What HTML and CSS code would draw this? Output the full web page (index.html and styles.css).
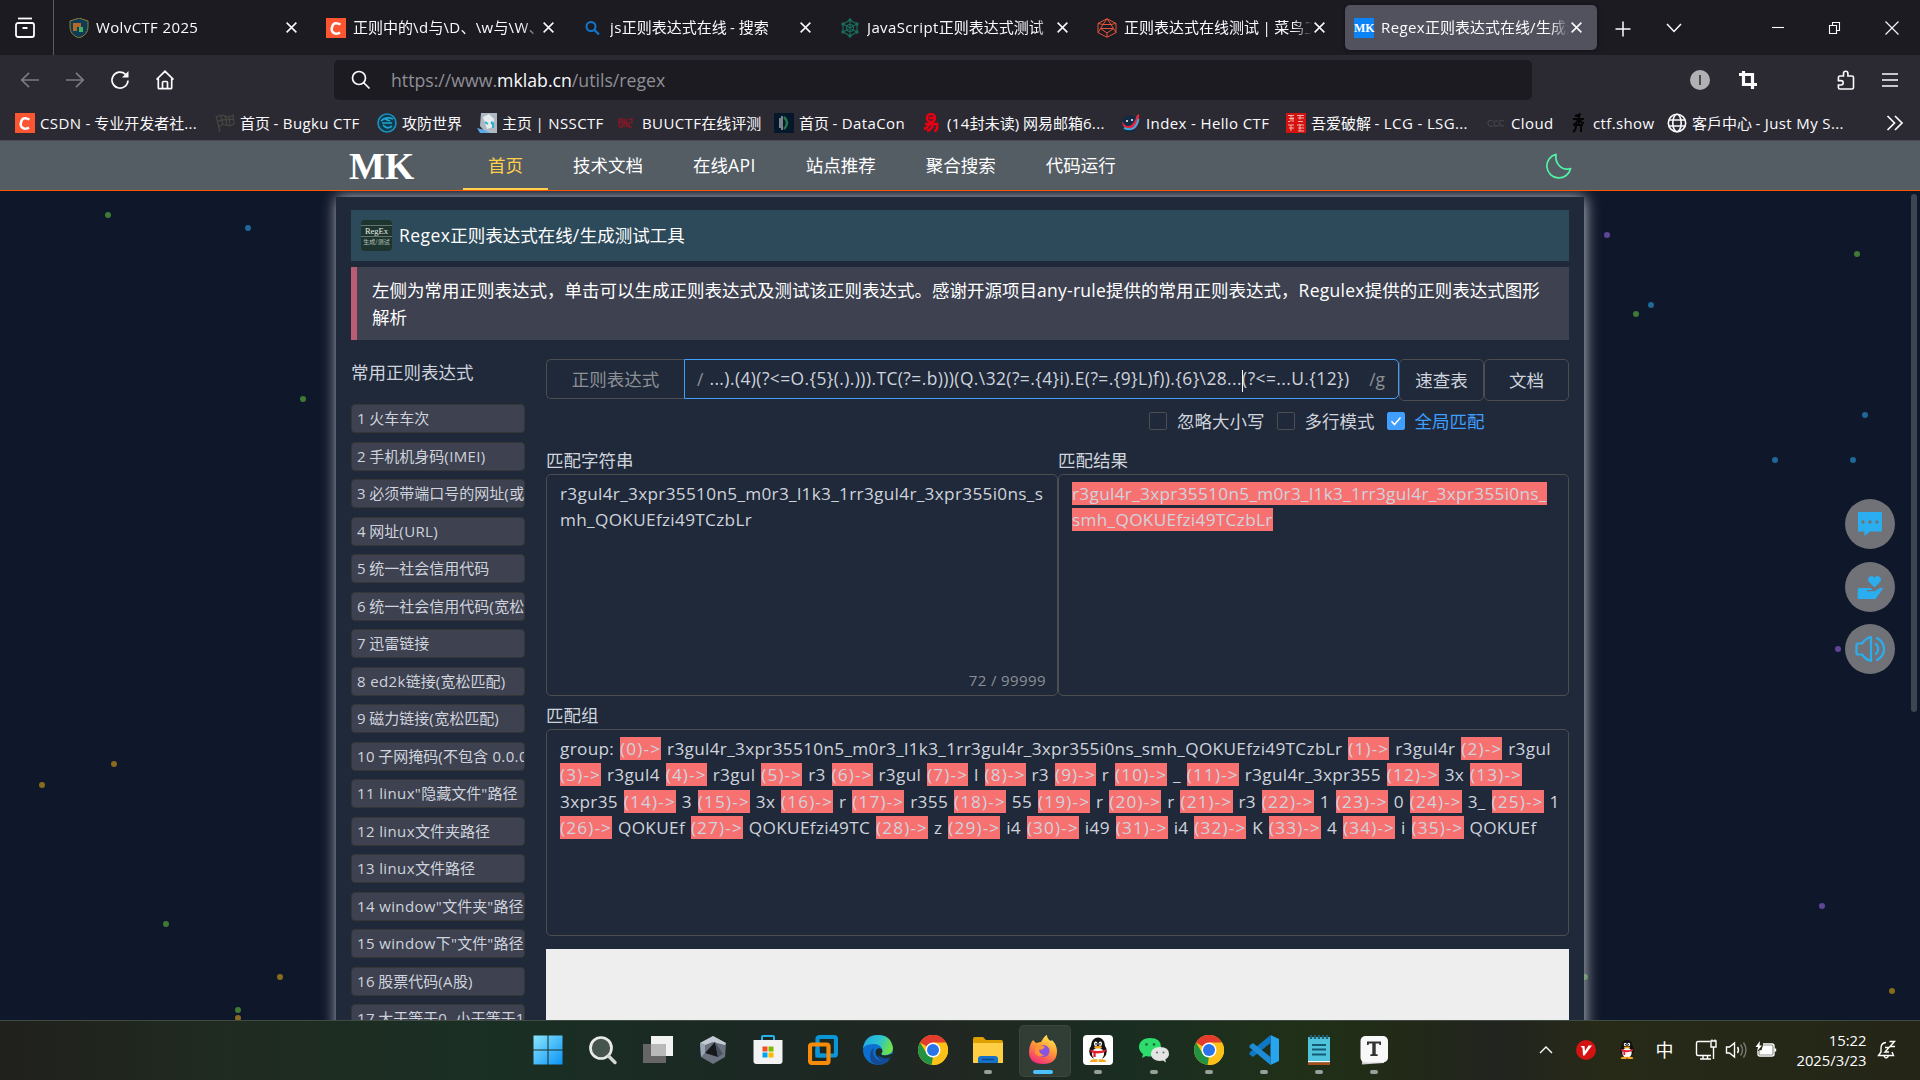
FILE: index.html
```html
<!DOCTYPE html>
<html lang="zh-CN">
<head>
<meta charset="utf-8">
<title>Regex正则表达式在线/生成测试工具</title>
<link rel="stylesheet" href="styles.css">
</head>
<body>
<svg class="defs" aria-hidden="true">
  <symbol id="x" viewBox="0 0 12 12"><path d="M1.5 1.5l9 9M10.5 1.5l-9 9" stroke="currentColor" stroke-width="1.4" fill="none"/></symbol>
  <symbol id="chrome" viewBox="0 0 30 30"><circle cx="15" cy="15" r="15" fill="#fbc116"/><path d="M15 15L2 7.5A15 15 0 0 1 28 7.5Z" fill="#e33b2e"/><path d="M2 7.5L9 19 15 22 13.500 29.900A15 15 0 0 1 2 7.500Z" fill="#229342"/><path d="M15 7.500H28A15 15 0 0 1 14 30L21 18Z" fill="#fbc116"/><circle cx="15" cy="15" r="7.500" fill="#fff"/><circle cx="15" cy="15" r="6" fill="#2a74ea"/></symbol>
  <symbol id="penguin" viewBox="0 0 20 22"><ellipse cx="10" cy="12" rx="7.600" ry="7.500" fill="#111"/><ellipse cx="10" cy="7" rx="6" ry="6.800" fill="#111"/><ellipse cx="10" cy="14.500" rx="5.200" ry="5.500" fill="#fff"/><ellipse cx="8" cy="5.500" rx="1.500" ry="2" fill="#fff"/><ellipse cx="12" cy="5.500" rx="1.500" ry="2" fill="#fff"/><circle cx="8.300" cy="5.700" r=".7"/><circle cx="11.700" cy="5.700" r=".7"/><ellipse cx="10" cy="8.700" rx="3.400" ry="1.100" fill="#f8a71a"/><path d="M3.500 10.500q6.500 2.800 13 0v2.300q-4 1.400-8.500 1.100V17H6v-3.500l-2.500-.8z" fill="#e41f2c"/><path d="M3 21q0-2 4-2h2.500v2.500H4zM17 21q0-2-4-2h-2.500v2.500H16z" fill="#f8a71a"/></symbol>
</svg>

<header class="tabstrip">
  <div class="history"><svg width="22" height="22" viewBox="0 0 22 22" fill="none" stroke="#fbfbfe" stroke-width="1.8"><path d="M4 1.500h14"/><rect x="2" y="6" width="18" height="14" rx="2"/><path d="M8.500 11h5" stroke-width="2"/></svg></div>
  <div class="tabs">
    <div class="tab"><svg class="fav" viewBox="0 0 20 20"><path d="M10 0l9 3v6q0 8-9 11Q1 17 1 9V3z" fill="#0e3c57" stroke="#8a8130"/><path d="M4 5h8v4H8v4H4z" fill="#b5682a"/><path d="M10 9h4v5h-4z" fill="#42b35c"/></svg><span class="ttl"><i>WolvCTF 2025</i></span><svg class="cls"><use href="#x"/></svg></div>
    <div class="tab"><svg class="fav" viewBox="0 0 20 20"><path fill="#fc5531" d="M0 0h20v20H0z"/><path d="M14.500 6.500Q8 3 6.200 8.500T9 15.500q3 .6 5-1" fill="none" stroke="#fff" stroke-width="2.500"/></svg><span class="ttl">正则中的<i>\d</i>与<i>\D</i>、<i>\w</i>与<i>\W</i>、</span><svg class="cls"><use href="#x"/></svg></div>
    <div class="tab"><svg class="fav" viewBox="0 0 20 20"><circle cx="8" cy="8.500" r="4.500" fill="none" stroke="#0f77d0" stroke-width="2"/><path d="M11 11.500l5 5" stroke="#0f77d0" stroke-width="2.200"/></svg><span class="ttl"><i>js</i>正则表达式在线 <i>-</i> 搜索</span><svg class="cls"><use href="#x"/></svg></div>
    <div class="tab"><svg class="fav" viewBox="0 0 20 20" fill="none" stroke="#1a6d5d" stroke-width="1.100"><path d="M10 2l7 4v8l-7 4-7-4V6zM10 2v16M3 6l14 8M17 6L3 14"/><circle cx="10" cy="10" r="3.500"/><g fill="#1a6d5d" stroke="none"><circle cx="10" cy="2" r="1.700"/><circle cx="17" cy="6" r="1.700"/><circle cx="17" cy="14" r="1.700"/><circle cx="10" cy="18" r="1.700"/><circle cx="3" cy="14" r="1.700"/><circle cx="3" cy="6" r="1.700"/></g></svg><span class="ttl"><i>JavaScript</i>正则表达式测试</span><svg class="cls"><use href="#x"/></svg></div>
    <div class="tab"><svg class="fav" viewBox="0 0 20 20" fill="none" stroke="#e2563a" stroke-width="1"><path d="M10 .8l9 4.600v9.200l-9 4.600-9-4.600V5.400zM6 6.500h8l2.500 4L10 15l-6.500-4.500zM10 .8L6 6.500M10 .8l4 5.700M1 14.600l2.500-4.100M19 14.600l-2.500-4.100M1 5.400l5 1.100M19 5.400l-5 1.100M10 15v4.200M3.500 10.500h13"/></svg><span class="ttl">正则表达式在线测试 <i>|</i> 菜鸟工</span><svg class="cls"><use href="#x"/></svg></div>
    <div class="tab on"><span class="fav mkfav">MK</span><span class="ttl"><i>Regex</i>正则表达式在线<i>/</i>生成测</span><svg class="cls"><use href="#x"/></svg></div>
  </div>
  <svg class="strip-ic plus" width="16" height="16" viewBox="0 0 16 16"><path d="M8 .5v15M.5 8h15"/></svg>
  <svg class="strip-ic down" width="16" height="10" viewBox="0 0 16 10"><path d="M1 1l7 7.500L15 1"/></svg>
  <div class="winctl">
    <svg width="14" height="14" viewBox="0 0 14 14"><path d="M1 6.500h12"/></svg>
    <svg width="14" height="14" viewBox="0 0 14 14"><path d="M1.500 4.500h7v8h-7zM4.500 4.500V1.500h7v8h-3"/></svg>
    <svg width="14" height="14" viewBox="0 0 14 14"><path d="M.5 .5l13 13M13.500 .5l-13 13"/></svg>
  </div>
</header>

<nav class="toolbar">
  <div class="nav-ic">
    <svg class="dim" width="20" height="20" viewBox="0 0 20 20"><path d="M19 10H2M9 2.800L1.800 10 9 17.200"/></svg>
    <svg class="dim" width="20" height="20" viewBox="0 0 20 20"><path d="M1 10h17M11 2.800L18.200 10 11 17.200"/></svg>
    <svg width="20" height="20" viewBox="0 0 20 20"><path d="M18 10.500a8 8 0 1 1-2.500-6.200L17 6"/><path d="M18.500 1v6.500H12z" fill="#fbfbfe" stroke="none"/></svg>
    <svg width="20" height="20" viewBox="0 0 20 20"><path d="M1.500 9.500L10 1.300l8.500 8.200M3.300 8.500v9.200q0 1 1 1h11.400q1 0 1-1V8.500M7.500 18.500v-6q0-1 1-1h3q1 0 1 1v6"/></svg>
  </div>
  <div class="urlbar">
    <svg width="20" height="20" viewBox="0 0 20 20" fill="none" stroke="#fbfbfe" stroke-width="1.700"><circle cx="8" cy="8" r="6.500"/><path d="M12.500 12.500l6 6"/></svg>
    <span>https://www.<b>mklab.cn</b>/utils/regex</span>
  </div>
  <div class="ext">
    <svg width="20" height="20" viewBox="0 0 20 20"><circle cx="10" cy="10" r="10" fill="#b1b1b3"/><path d="M10 5v10" stroke="#2b2a33" stroke-width="1.500"/></svg>
    <svg width="20" height="20" viewBox="0 0 20 20" fill="none" stroke="#fbfbfe" stroke-width="3.200"><path d="M5.500 1v13.500H19M1 4.500h13.500V19"/></svg>
    <svg width="20" height="20" viewBox="0 0 20 20" fill="none" stroke="#fbfbfe" stroke-width="1.600"><path d="M7.500 6V3.500a2.200 2.200 0 0 1 4.400 0V6h4q1.600 0 1.600 1.600v9.800q0 1.600-1.600 1.600H4q-1.600 0-1.600-1.600V15H5a2.200 2.200 0 0 0 0-4.400H2.400V7.600Q2.400 6 4 6z"/></svg>
    <svg width="16" height="16" viewBox="0 0 16 16" stroke="#fbfbfe" stroke-width="1.500"><path d="M0 2h16M0 8h16M0 14h16"/></svg>
  </div>
</nav>

<div class="bookmarks">
  <div><svg viewBox="0 0 20 20"><path fill="#fc5531" d="M0 0h20v20H0z"/><path d="M14.500 6.500Q8 3 6.200 8.500T9 15.500q3 .6 5-1" fill="none" stroke="#fff" stroke-width="2.500"/></svg><span><i>CSDN -</i> 专业开发者社<i>...</i></span></div>
  <div><svg viewBox="0 0 20 20" fill="none" stroke="#45443f" stroke-width="1.300"><path d="M1 3l4 16M2 4q4-3 8-1t8-1l1 9q-4 3-8 1t-7 2M6 3l2 9M10 3l2 9M14 3l1 10M3 8q8-2 15-2"/></svg><span>首页 <i>- Bugku CTF</i></span></div>
  <div><svg viewBox="0 0 20 20"><circle cx="10" cy="10" r="9" fill="#103a4d" stroke="#1a91bd" stroke-width="1.600"/><path d="M4 8q5-5 12-2M5 10h10M6 12q4 5 9 1M8 6l5 2" stroke="#1fa5cf" stroke-width="1.700" fill="none"/></svg><span>攻防世界</span></div>
  <div><svg viewBox="0 0 20 20"><path d="M4 0h16v20H9L3 13z" fill="#aeb9c4"/><path d="M6 4l6-3 5 5-1 8-6 2z" fill="#e5ebef"/><path d="M8 9l3 2M14 9l2 1v5" stroke="#2ab4cc" stroke-width="2"/><path d="M0 15q7 1 13 5H3z" fill="#5da8e8"/></svg><span>主页 <i>| NSSCTF</i></span></div>
  <div><svg viewBox="0 0 20 20" fill="none" stroke="#8c1626" stroke-width="1.300"><path d="M2 6v8M2 6h3v3H2M2 14h3v-4M7 14V6l3 8V6M12 6h3v3l-3 1v4h3"/></svg><span><i>BUUCTF</i>在线评测</span></div>
  <div><svg viewBox="0 0 20 20"><path fill="#05172a" d="M0 0h20v20H0z"/><path d="M6 5v10M8 3v14" stroke="#9b9fa3" stroke-width="1.600"/><path d="M10 4q6 6 0 12" stroke="#23754c" stroke-width="2.500" fill="none"/></svg><span>首页 <i>- DataCon</i></span></div>
  <div><svg viewBox="0 0 20 20" fill="none" stroke="#e60012" stroke-width="2.600"><circle cx="9" cy="5" r="4"/><path d="M7 5h5M3 11h12q1 7-3 7M7 11q-1 4-5 5M11 12q-2 5-6 6"/></svg><span><i>(14</i>封未读<i>)</i> 网易邮箱<i>6...</i></span></div>
  <div><svg viewBox="0 0 20 20"><circle cx="9" cy="11" r="8.500" fill="#122b45"/><path d="M1 8q3 6 7 5t7-8q0-3 3-4 1 16-9 16Q1 16 1 8" fill="#df2941"/><path d="M3 15q11 5 14.500-9" stroke="#3ea9df" stroke-width="2" fill="none"/><circle cx="6" cy="8" r="1" fill="#fff"/><circle cx="11" cy="7" r="1" fill="#fff"/></svg><span><i>Index - Hello CTF</i></span></div>
  <div><svg viewBox="0 0 20 20"><path fill="#d41212" d="M0 0h20v20H0z"/><path d="M2 2.500h6M5 2.500v6M3 5.500h5M2 8.500h2M7 4v5M11 2.500h7M12 5h6M14 2.500v4M12 8.500h5M2 12h6M5 12v6M3 15h5M11 12h7M12 15h6M12 18h6M14 11v7" stroke="#f5c5b5" stroke-width=".9"/></svg><span>吾爱破解 <i>- LCG - LSG...</i></span></div>
  <div><svg viewBox="0 0 20 20" fill="none" stroke="#43424b" stroke-width="1.300"><path d="M7 8q-5-2-5 2t5 3M12 8q-5-1-4 3t5 1M18 8q-5-2-4.500 2t4.500 2.500"/></svg><span><i>Cloud</i></span></div>
  <div><svg viewBox="0 0 20 20" fill="none" stroke="#050505" stroke-width="2"><path d="M7 3l6-2M5 6h11M11 1v10M10 6q-1 5-5 6M12 7q1 3 4 3M7 12h8M8 12q0 5-3 7M13 12v7"/></svg><span><i>ctf.show</i></span></div>
  <div><svg viewBox="0 0 20 20" fill="none" stroke="#fbfbfe" stroke-width="1.600"><circle cx="10" cy="10" r="8.700"/><ellipse cx="10" cy="10" rx="4.200" ry="8.700"/><path d="M2 7h16M2 13h16"/></svg><span>客戶中心 <i>- Just My S...</i></span></div>
  <svg class="more" width="18" height="16" viewBox="0 0 18 16"><path d="M1.500 1l7 7-7 7M9 1l7 7-7 7" fill="none" stroke="#fbfbfe" stroke-width="1.700"/></svg>
</div>

<div class="sitebar">
  <div class="inner">
    <span class="logo">MK</span>
    <a class="on">首页</a><a>技术文档</a><a>在线<i>API</i></a><a>站点推荐</a><a>聚合搜索</a><a>代码运行</a>
    <svg class="moon" width="26" height="26" viewBox="0 0 26 26"><path d="M10 1.300A12 12 0 1 0 24.600 15.500Q18 17.500 13.500 13T10 1.300Z" fill="none" stroke="#4ff5a5" stroke-width="1.700" stroke-linejoin="round"/></svg>
  </div>
</div>

<main class="page">
  <svg class="stars" viewBox="0 191 1920 829">
    <g fill="#3f7a35"><circle cx="108" cy="215" r="3"/><circle cx="303" cy="399" r="3"/><circle cx="166" cy="924" r="3"/><circle cx="238" cy="1010" r="3"/><circle cx="1857" cy="254" r="3"/><circle cx="1636" cy="314" r="3"/><circle cx="1585" cy="977" r="3"/></g>
    <g fill="#1f6796"><circle cx="248" cy="228" r="3"/><circle cx="1651" cy="305" r="3"/><circle cx="1865" cy="415" r="3"/><circle cx="1853" cy="460" r="3"/><circle cx="1775" cy="460" r="3"/></g>
    <g fill="#8a6a1c"><circle cx="114" cy="764" r="3"/><circle cx="42" cy="785" r="3"/><circle cx="280" cy="977" r="3"/><circle cx="238" cy="1018" r="3"/><circle cx="1892" cy="991" r="3"/></g>
    <g fill="#5e4596"><circle cx="1607" cy="235" r="3"/><circle cx="1838" cy="649" r="3"/><circle cx="1822" cy="906" r="3"/></g>
  </svg>

  <div class="card">
    <h1><span class="badge"><em>RegEx</em><em>生成/测试</em></span><span><i>Regex</i>正则表达式在线<i>/</i>生成测试工具</span></h1>
    <p class="note">左侧为常用正则表达式，单击可以生成正则表达式及测试该正则表达式。感谢开源项目<i>any-rule</i>提供的常用正则表达式，<i>Regulex</i>提供的正则表达式图形解析</p>
    <div class="cols">
      <aside>
        <h2>常用正则表达式</h2>
        <ul>
          <li><i>1</i> 火车车次</li>
          <li><i>2</i> 手机机身码<i>(IMEI)</i></li>
          <li><i>3</i> 必须带端口号的网址<i>(</i>或</li>
          <li><i>4</i> 网址<i>(URL)</i></li>
          <li><i>5</i> 统一社会信用代码</li>
          <li><i>6</i> 统一社会信用代码<i>(</i>宽松</li>
          <li><i>7</i> 迅雷链接</li>
          <li><i>8 ed2k</i>链接<i>(</i>宽松匹配<i>)</i></li>
          <li><i>9</i> 磁力链接<i>(</i>宽松匹配<i>)</i></li>
          <li><i>10</i> 子网掩码<i>(</i>不包含<i> 0.0.0</i></li>
          <li><i>11 linux"</i>隐藏文件<i>"</i>路径</li>
          <li><i>12 linux</i>文件夹路径</li>
          <li><i>13 linux</i>文件路径</li>
          <li><i>14 window"</i>文件夹<i>"</i>路径</li>
          <li><i>15 window</i>下<i>"</i>文件<i>"</i>路径</li>
          <li><i>16</i> 股票代码<i>(A</i>股<i>)</i></li>
          <li><i>17</i> 大于等于<i>0, </i>小于等于<i>1</i></li>
        </ul>
      </aside>
      <section class="work">
        <div class="inrow">
          <div class="pre">正则表达式</div>
          <div class="inp"><span class="g">/</span><span class="rx">...).(4)(?&lt;=O.{5}(.).))).TC(?=.b)))(Q.\32(?=.{4}i).E(?=.{9}L)f)).{6}\28...<u></u>(?&lt;=...U.{12})</span><span class="g">/g</span></div>
          <button>速查表</button><button>文档</button>
        </div>
        <div class="opts">
          <label><s></s><span>忽略大小写</span></label><label><s></s><span>多行模式</span></label>
          <label class="ck"><s><svg width="12" height="12" viewBox="0 0 12 12"><path d="M1.500 6.200l3 3.300 6-7" fill="none" stroke="#fff" stroke-width="1.500"/></svg></s><span>全局匹配</span></label>
        </div>
        <div class="pair">
          <div><h3>匹配字符串</h3><div class="box in"><p>r3gul4r_3xpr35510n5_m0r3_l1k3_1rr3gul4r_3xpr355i0ns_s<br>mh_QOKUEfzi49TCzbLr</p><small>72 / 99999</small></div></div>
          <div><h3>匹配结果</h3><div class="box"><p><mark>r3gul4r_3xpr35510n5_m0r3_l1k3_1rr3gul4r_3xpr355i0ns_<br>smh_QOKUEfzi49TCzbLr</mark></p></div></div>
        </div>
        <h3 class="gh">匹配组</h3>
        <div class="box groups"><p>group: <mark>(0)-&gt;</mark> r3gul4r_3xpr35510n5_m0r3_l1k3_1rr3gul4r_3xpr355i0ns_smh_QOKUEfzi49TCzbLr <mark>(1)-&gt;</mark> r3gul4r <mark>(2)-&gt;</mark> r3gul<br>
<mark>(3)-&gt;</mark> r3gul4 <mark>(4)-&gt;</mark> r3gul <mark>(5)-&gt;</mark> r3 <mark>(6)-&gt;</mark> r3gul <mark>(7)-&gt;</mark> l <mark>(8)-&gt;</mark> r3 <mark>(9)-&gt;</mark> r <mark>(10)-&gt;</mark> _ <mark>(11)-&gt;</mark> r3gul4r_3xpr355 <mark>(12)-&gt;</mark> 3x <mark>(13)-&gt;</mark><br>
3xpr35 <mark>(14)-&gt;</mark> 3 <mark>(15)-&gt;</mark> 3x <mark>(16)-&gt;</mark> r <mark>(17)-&gt;</mark> r355 <mark>(18)-&gt;</mark> 55 <mark>(19)-&gt;</mark> r <mark>(20)-&gt;</mark> r <mark>(21)-&gt;</mark> r3 <mark>(22)-&gt;</mark> 1 <mark>(23)-&gt;</mark> 0 <mark>(24)-&gt;</mark> 3_ <mark>(25)-&gt;</mark> 1<br>
<mark>(26)-&gt;</mark> QOKUEf <mark>(27)-&gt;</mark> QOKUEfzi49TC <mark>(28)-&gt;</mark> z <mark>(29)-&gt;</mark> i4 <mark>(30)-&gt;</mark> i49 <mark>(31)-&gt;</mark> i4 <mark>(32)-&gt;</mark> K <mark>(33)-&gt;</mark> 4 <mark>(34)-&gt;</mark> i <mark>(35)-&gt;</mark> QOKUEf</p></div>
        <div class="graph"></div>
      </section>
    </div>
  </div>

  <div class="floaters">
    <div><svg width="26" height="26" viewBox="0 0 26 26"><path d="M1 1h24v19.500H13L7.500 25v-4.500H1z" fill="#2aaef0"/><g fill="#707277"><circle cx="6" cy="11" r="1.700"/><circle cx="13" cy="11" r="1.700"/><circle cx="20" cy="11" r="1.700"/></g></svg></div>
    <div><svg width="26" height="26" viewBox="0 0 26 26" fill="#2aaef0"><path d="M17.500 13.500l-5.700-5.800a3.400 3.400 0 0 1 5.700-4 3.400 3.400 0 0 1 5.700 4z"/><path d="M2 14h11q2.500.3 2.500 2H10v1.300h7.500L23 14q2-.5 3 .6L18.500 25H2q-1.300 0-1.300-1.500V15.500Q.7 14 2 14z"/></svg></div>
    <div><svg width="30" height="28" viewBox="0 0 30 28" fill="none" stroke="#2aaef0" stroke-width="2.200" stroke-linejoin="round" stroke-linecap="round"><path d="M2.500 8.500q-1 0-1 1v9q0 1 1 1H7q4 5.500 9 6.500V2Q11 3 7 8.500z"/><path d="M21 9q4.500 5 0 10M22 3q7 4 7 11t-7 11"/></svg></div>
  </div>
  <div class="scroll"></div>
</main>

<footer class="taskbar">
  <div class="apps">
    <div><svg viewBox="0 0 30 30"><defs><linearGradient id="w" x2="1" y2="1"><stop stop-color="#8be6fd"/><stop offset="1" stop-color="#0a93f5"/></linearGradient></defs><path d="M.5 .5H14.500V14.500H.5zM15.500 .5h14v14h-14zM.5 15.500h14v14H.5zM15.500 15.500h14v14h-14z" fill="url(#w)"/></svg></div>
    <div><svg viewBox="0 0 30 30"><circle cx="13" cy="13" r="10.500" fill="#46564f" stroke="#e9eaea" stroke-width="2.700"/><path d="M20.500 21l6.500 6.500" stroke="#d2d5d6" stroke-width="3.500" stroke-linecap="round"/></svg></div>
    <div><svg viewBox="0 0 30 30"><path d="M0 9h23v19H0z" fill="#666"/><path d="M8 1h22v20H8z" fill="#f2f2f2"/><path d="M8 9h15v12H8z" fill="#b9b9b9"/></svg></div>
    <div><svg viewBox="0 0 30 30"><path d="M15 1l13 7-1 14-12 7L3 22 2 8z" fill="#6b7280"/><path d="M15 1L2 8l5 2 8-3 12 3 1-2z" fill="#c3cad4"/><path d="M2 8l1 14 4-4V10z" fill="#9aa4b2"/><path d="M17 7L7 18l13 4z" fill="#16181c"/><path d="M17 7l3 15 5-3z" fill="#4b5260"/></svg></div>
    <div><svg viewBox="0 0 30 30"><path d="M9 7V2q0-1 1-1h10q1 0 1 1v5" fill="none" stroke="#27b4ea" stroke-width="2"/><path d="M.5 5h29v21q0 3-3 3h-23q-3 0-3-3z" fill="#f3f3f3"/><path d="M9.500 11.500h5v5h-5z" fill="#f25022"/><path d="M15.500 11.500h5v5h-5z" fill="#7fba00"/><path d="M9.500 17.500h5v5h-5z" fill="#00a4ef"/><path d="M15.500 17.500h5v5h-5z" fill="#ffb900"/></svg></div>
    <div><svg viewBox="0 0 30 30" fill="none" stroke-width="4.200"><rect x="9.500" y="2" width="18.500" height="18.500" rx="2" stroke="#0a95d6"/><rect x="2" y="9.500" width="18.500" height="18.500" rx="2" stroke="#f68b0a"/><path d="M9.500 14v6.500H17" stroke="#0a95d6"/></svg></div>
    <div><svg viewBox="0 0 30 30"><defs><linearGradient id="e" x2="1" y2=".3"><stop stop-color="#1fa6e8"/><stop offset=".6" stop-color="#2cc4cf"/><stop offset="1" stop-color="#6ee04c"/></linearGradient></defs><circle cx="15" cy="15" r="15" fill="#0d6fcf"/><path d="M0 13Q2 0 15 0t15 13q0 6-7 7-4 .5-5-1 2-2 1-5-2-5-8-5Q3 9 0 13z" fill="url(#e)"/><path d="M11 13q-3 8 4 12 6 3 12-1-5 6-12 6Q7 29 7 21q0-6 4-8z" fill="#134a93"/><path d="M18 19q2 3 10 0 4-1 1 4-6 4-12 1-6-4-4-9 2-3 6-1 1 3-1 5z" fill="#1c2b24"/><path d="M15 20q5 5 13 2-5 6-12 3z" fill="#134a93"/></svg></div>
    <div><svg><use href="#chrome"/></svg></div>
    <div class="run"><svg viewBox="0 0 30 30"><path d="M0 4q0-2 2-2h8l3 3h15q2 0 2 2v10H0z" fill="#e0a100"/><path d="M0 8h30v20H0z" fill="#ffce45"/><path d="M5 28v-4q0-3 3-3h14q3 0 3 3v4z" fill="#1672c9"/><path d="M9 24.500h12" stroke="#0b4a93" stroke-width="1.500"/></svg></div>
    <div class="run act"><svg viewBox="0 0 30 30"><defs><linearGradient id="f" x1=".8" y1="0" x2=".3" y2="1"><stop stop-color="#fff14a"/><stop offset=".45" stop-color="#ff9420"/><stop offset="1" stop-color="#f3166e"/></linearGradient></defs><path d="M3 8l2-3 3 3 5-1q4-7 6-7 0 4 4 6l1-1q5 5 5 11 0 13-14 13T1 17q0-5 2-9z" fill="url(#f)"/><circle cx="15.500" cy="16" r="6" fill="#7a42e0"/><path d="M7 12q5-4 10 0-2 3-6 3 1 5 6 5-7 3-10-2z" fill="#ff8a1e"/></svg></div>
    <div class="run"><svg viewBox="0 0 30 30"><rect width="30" height="30" rx="4" fill="#fff"/><svg x="3.500" y="2" width="23" height="26"><use href="#penguin"/></svg></svg></div>
    <div class="run"><svg viewBox="0 0 30 30"><path d="M11 3C4 3 0 7 0 12q0 4 4 7l-1 4 4-2q4 1 7 0 8-2 8-9 0-9-11-9z" fill="#2ddc6c"/><path d="M21 12c-6 0-9 3-9 7s4 7 9 7l3-.5 3 2-.7-3q3.700-2.500 3.700-5.500 0-7-9-7z" fill="#e3e5e4"/><g fill="#197a3e"><circle cx="7.500" cy="9.500" r="1.400"/><circle cx="15" cy="9.500" r="1.400"/></g><g fill="#777"><circle cx="18" cy="17.500" r="1.100"/><circle cx="24.500" cy="17.500" r="1.100"/></g></svg></div>
    <div class="run"><svg><use href="#chrome"/></svg></div>
    <div class="run"><svg viewBox="0 0 30 30"><path d="M21.500 0L30 4v22l-8.500 4z" fill="#27a5ee"/><path d="M21.500 0v8L4 22 .5 19.500v-2z" fill="#0f78c2"/><path d="M21.500 30v-8L4 8 .5 10.500v2z" fill="#1e8bd4"/></svg></div>
    <div class="run"><svg viewBox="0 0 30 30"><path d="M4 2h22v25H4z" fill="#4fc3dc"/><path d="M4 26h22v1.500H4z" fill="#fff"/><path d="M4 27.500h22V30H4z" fill="#a5501a"/><path d="M8 10h14M8 14.500h14M8 19.500h14" stroke="#145a73" stroke-width="1.800"/><path d="M7 0v4M11 0v4M15 0v4M19 0v4M23 0v4" stroke="#1f5e75" stroke-width="2.200"/></svg></div>
    <div class="run"><svg viewBox="0 0 30 30"><path d="M2 5l23 0v23l-22 1.500z" fill="#cfcfcf"/><rect x="1.500" y="1" width="27.500" height="26.500" rx="5" fill="#f8f8f8"/><path d="M8 10V6.500h14V10h-1.500l-.5-1.500h-3.300V19l2 .5V21h-7.400v-1.500l2-.5V8.500H10L9.500 10z" fill="#333"/></svg></div>
  </div>
  <div class="tray">
    <svg width="14" height="9" viewBox="0 0 14 9"><path d="M1 8l6-6 6 6"/></svg>
    <svg width="20" height="20" viewBox="0 0 20 20"><circle cx="10" cy="10" r="10" fill="#d31212" stroke="none"/><path d="M4.500 6h4l.5 5 3.500-5.500H16L8.500 15.500H7L6.500 8z" fill="#fff" stroke="none"/></svg>
    <svg class="ns" width="18" height="21"><use href="#penguin"/></svg>
    <b>中</b>
    <svg width="22" height="22" viewBox="0 0 22 22"><path d="M15 2.500H3q-1.500 0-1.500 1.500v11q0 1.500 1.500 1.500h13M5 20h11M8 17v3M12.500 17v3M16 2h5v6h-5zM18.500 8v12M17 .5v2M20 .5v2"/></svg>
    <svg width="22" height="20" viewBox="0 0 22 20"><path d="M1.500 7v6h3l5 4V3l-5 4zM12.500 7q2 3 0 6"/><path d="M15.500 4.500q4 5.500 0 11M18.500 2.500q5 7.500 0 15" stroke="#777a70"/></svg>
    <svg width="22" height="18" viewBox="0 0 22 18"><path d="M8 3h9q2 0 2 2v8q0 2-2 2H5q-2 0-2-2v-3M20.500 7.500v3"/><path d="M8.500 5H17v8H5v-3h2z" fill="#fff"/><path d="M5 0L.5 6H3L2 10.500 7 4.500H4.500z" fill="#fff" stroke="none"/></svg>
    <div class="clock">15:22<br>2025/3/23</div>
    <svg width="20" height="20" viewBox="0 0 20 20"><path d="M9 2.500q-5 .5-5 5.500v4L1.500 15.500h15L15 12M7 16q2 4 4.500 0M12.500 1.500h5l-4.500 5h5M8 7.500h4l-4 4.500h4"/></svg>
  </div>
</footer>
</body>
</html>
```
FILE: styles.css
```css
* { box-sizing: border-box; margin: 0; padding: 0; }
body {
  width: 1920px; height: 1080px; overflow: hidden;
  display: flex; flex-direction: column;
  background: #0f172a; color: #fbfbfe;
  font: 15px/1.2 "Noto Sans CJK SC", sans-serif;
}
/* latin runs get their own face inside CJK text */
i { font-style: normal; letter-spacing: .025em; font-family: "Open Sans", sans-serif; }
svg { display: block; flex: none; }
.defs { position: absolute; width: 0; height: 0; }

/* tab strip */
.tabstrip { height: 55px; background: #1c1b22; display: flex; align-items: center; }
.history { width: 54px; height: 55px; border-right: 1px solid #5b5b66; display: flex; align-items: center; padding: 0 0 0 14px; }
.tabs { display: flex; gap: 5px; padding-left: 6px; }
.tab { width: 252px; height: 45px; border-radius: 5px; display: flex; align-items: center; padding: 0 9px; }
.tab.on { background: #52525e; box-shadow: 0 0 4px rgba(0,0,0,.5); }
.fav { width: 20px; height: 20px; }
.mkfav { background: #0a84f5; color: #fff; font: bold 12px/20px "Liberation Serif", serif; text-align: center; flex: none; }
.ttl { flex: none; width: 188px; margin-left: 7px; overflow: hidden; white-space: nowrap; line-height: 24px; padding-bottom: 1px;
  -webkit-mask-image: linear-gradient(90deg, #000 90%, transparent 100%); mask-image: linear-gradient(90deg, #000 90%, transparent 100%); }
.cls { width: 13px; height: 13px; margin-left: 1px; }
.strip-ic, .winctl svg { fill: none; stroke: #fbfbfe; stroke-width: 1.5; }
.winctl svg { stroke-width: 1.1; }
.plus { margin: 3px 0 0 18px; }
.down { margin-left: 35px; }
.winctl { display: flex; gap: 43px; margin-left: auto; padding-right: 21px; }

/* navigation toolbar */
.toolbar { height: 50px; background: #2b2a33; display: flex; align-items: center; }
.nav-ic { display: flex; gap: 25px; width: 334px; padding-left: 20px; }
.nav-ic svg { fill: none; stroke: #fbfbfe; stroke-width: 1.7; }
.nav-ic .dim { stroke: #7c7b83; }
.urlbar { width: 1198px; height: 40px; border-radius: 5px; background: #1c1b22; display: flex; align-items: center; gap: 20px; padding-left: 17px; font: 17.7px/24px "Open Sans", sans-serif; color: #8f8f96; }
.urlbar b { font-weight: 400; color: #fbfbfe; }
.ext { flex: 1; display: flex; align-items: center; padding-left: 158px; }
.ext svg:nth-child(2) { margin-left: 28px; }
.ext svg:nth-child(3) { margin-left: 78px; }
.ext svg:nth-child(4) { margin-left: 26px; }

/* bookmarks */
.bookmarks {
  height: 36px; background: #2b2a33; padding: 0 0 0 15px; border-bottom: 1px solid #4c4a55;
  display: grid; align-items: center;
  grid-template-columns: 200px 162px 100px 140px 157px 148px 199px 165px 200px 82px 99px 219px 20px;
}
.bookmarks div { display: flex; align-items: center; gap: 5px; white-space: nowrap; }
.bookmarks div svg { width: 20px; height: 20px; }
.bookmarks span { line-height: 24px; }

/* site header */
.sitebar { height: 50px; background: #545c64; border-bottom: 1px solid #ff5500; flex: none; }
.inner { width: 1248px; margin: 0 auto; height: 49px; padding: 0 12px 0 13px; display: flex; align-items: center; }
.logo { font: bold 38px/48px "Liberation Serif", serif; width: 114px; color: #fff; letter-spacing: -.2px; }
.inner a { height: 49px; padding: 0 25px; font-size: 17.5px; line-height: 47px; color: #fff; }
.inner a.on { color: #ffd04b; border-bottom: 2px solid #ffd04b; }
.moon { margin-left: auto; }

/* page area */
.page { position: relative; flex: 1; min-height: 0; overflow: hidden; padding: 6px 336px 0; color: #cfd3dc; font-size: 17.5px; }
.stars { position: absolute; left: 0; top: 0; width: 1920px; height: 829px; }
.card { position: relative; height: 900px; background: #1f293a; padding: 13px 15px; box-shadow: 1px 0 14px #c0c3ca; }
h1 { height: 51px; background: #2d4a5b; display: flex; align-items: center; gap: 7px; padding-left: 10px; font-size: 17.5px; font-weight: 400; color: #fff; }
h1 > span + span { padding-bottom: 2px; }
.badge { width: 31px; height: 31px; border-radius: 4px; background: #1e352f; display: flex; flex-direction: column; justify-content: center; text-align: center; }
.badge em { font: 8.5px/10px "Liberation Serif", serif; color: #e6ebe8; white-space: nowrap; border-top: 1px solid #64736d; }
.badge em + em { font: 6px/10px "Noto Sans CJK SC", sans-serif; color: #b9c2be; }
.note { margin-top: 6px; height: 73px; background: #3d4150; border-left: 6px solid #b95c74; padding: 9px 21px 0 15px; line-height: 27px; color: #fff; }
.note i { line-height: 1; letter-spacing: .015em; }
.cols { display: flex; gap: 21px; margin-top: 19px; }
aside { width: 174px; }
h2, h3 { font-size: 17.5px; font-weight: 400; line-height: 26px; }
ul { list-style: none; display: flex; flex-direction: column; gap: 8.5px; margin-top: 19px; }
li { height: 29px; border: 1px solid #363637; border-radius: 4px; background: #3d4150; font-size: 15px; line-height: 25px; padding-left: 5px; overflow: hidden; white-space: nowrap; }
.work { width: 1023px; }
.inrow { display: flex; height: 42px; align-items: flex-start; }
.pre { width: 138px; height: 40px; border: 1px solid #4c4d4f; border-right: 0; border-radius: 5px 0 0 5px; text-align: center; line-height: 38px; color: #8d9095; }
.inp { width: 715px; height: 40px; border: 1px solid #409eff; border-radius: 0 5px 5px 0; display: flex; align-items: center; padding: 0 13px 0 12px; font: 17.4px/24px "Open Sans", sans-serif; }
.rx { margin-left: 6px; flex: 1; white-space: nowrap; letter-spacing: .42px; }
.rx u { display: inline-block; width: 1px; height: 22px; margin-right: -1px; background: #fff; vertical-align: middle; }
.g { color: #8d9095; }
button { width: 85px; height: 42px; border: 1px solid #4c4d4f; border-radius: 5px; background: none; color: #cfd3dc; padding-bottom: 2px; font: 17.5px "Noto Sans CJK SC", sans-serif; }
.opts { display: flex; gap: 12px; padding-left: 603px; height: 40px; align-items: center; }
.opts label { display: flex; gap: 10px; align-items: center; }
.opts label span { padding-bottom: 2px; }
.opts s { width: 18px; height: 18px; border: 1px solid #4c4d4f; border-radius: 2px; display: flex; align-items: center; justify-content: center; }
.ck { color: #409eff; }
.ck s { background: #409eff; border-color: #409eff; }
.pair { display: grid; grid-template-columns: 512px 511px; margin-top: 6px; }
.pair h3 { height: 27px; }
.box { border: 1px solid #4c4d4f; border-radius: 5px; height: 222px; padding: 6px 13px; font: 17.2px/26.25px "Open Sans", sans-serif; letter-spacing: .32px; white-space: nowrap; }
.box.in { position: relative; }
.box small { position: absolute; right: 11px; bottom: 5px; font-size: 15px; line-height: 20px; color: #8d9095; letter-spacing: .4px; }
mark { background: #f87171; color: #cfd3dc; }
.groups p { word-spacing: 1.1px; }
.groups mark { letter-spacing: 1.15px; }
.gh { margin-top: 6px; height: 27px; }
.groups { height: 207px; }
.graph { height: 90px; margin-top: 13px; background: #eee; }
.floaters { position: absolute; right: 25px; top: 308px; display: flex; flex-direction: column; gap: 12.5px; }
.floaters div { width: 50px; height: 50px; border-radius: 50%; background: #707277; display: flex; align-items: center; justify-content: center; }
.scroll { position: absolute; right: 3px; top: 3px; width: 6px; height: 518px; border-radius: 3px; background: #3d4552; }

/* taskbar */
.taskbar {
  flex: none; height: 60px; border-top: 1px solid #3f4a42; display: flex; align-items: center;
  background: linear-gradient(90deg, #20201c 0, #202a20 200px, #1a2f24 500px, #1b2823 760px, #212722 950px, #1a2d22 1120px, #203018 1300px, #222a17 1400px, #22241f 1500px, #262a17 1600px, #242517 1920px);
}
.apps { display: flex; padding-left: 520px; }
.apps div { width: 55.1px; height: 59px; display: flex; align-items: center; justify-content: center; position: relative; padding-bottom: 1px; }
.apps div > svg { width: 30px; height: 30px; }
.apps .run::after { content: ""; position: absolute; bottom: 6px; width: 8px; height: 4px; border-radius: 2px; background: #99a09c; }
.apps .act::before { content: ""; position: absolute; left: 3px; top: 4px; width: 50px; height: 50px; border-radius: 5px; background: rgba(255,255,255,.09); border: 1px solid rgba(255,255,255,.05); }
.apps .run.act::after { width: 20px; background: #4cc2ff; }
.tray { flex: 1; display: flex; align-items: center; padding: 0 0 2px 137px; color: #fff; }
.tray svg { fill: none; stroke: #fff; stroke-width: 1.4; }
.tray .ns { stroke: none; fill: #000; }
.tray svg:nth-child(2) { margin-left: 23px; }
.tray svg:nth-child(3) { margin-left: 22px; }
.tray b { font-weight: 400; font-size: 18px; margin-left: 20px; }
.tray svg:nth-child(5) { margin-left: 21px; }
.tray svg:nth-child(6) { margin-left: 8px; }
.tray svg:nth-child(7) { margin-left: 8px; }
.clock { width: 90px; text-align: right; font: 14.8px/20px "Open Sans", sans-serif; margin-right: 10px; }
```
